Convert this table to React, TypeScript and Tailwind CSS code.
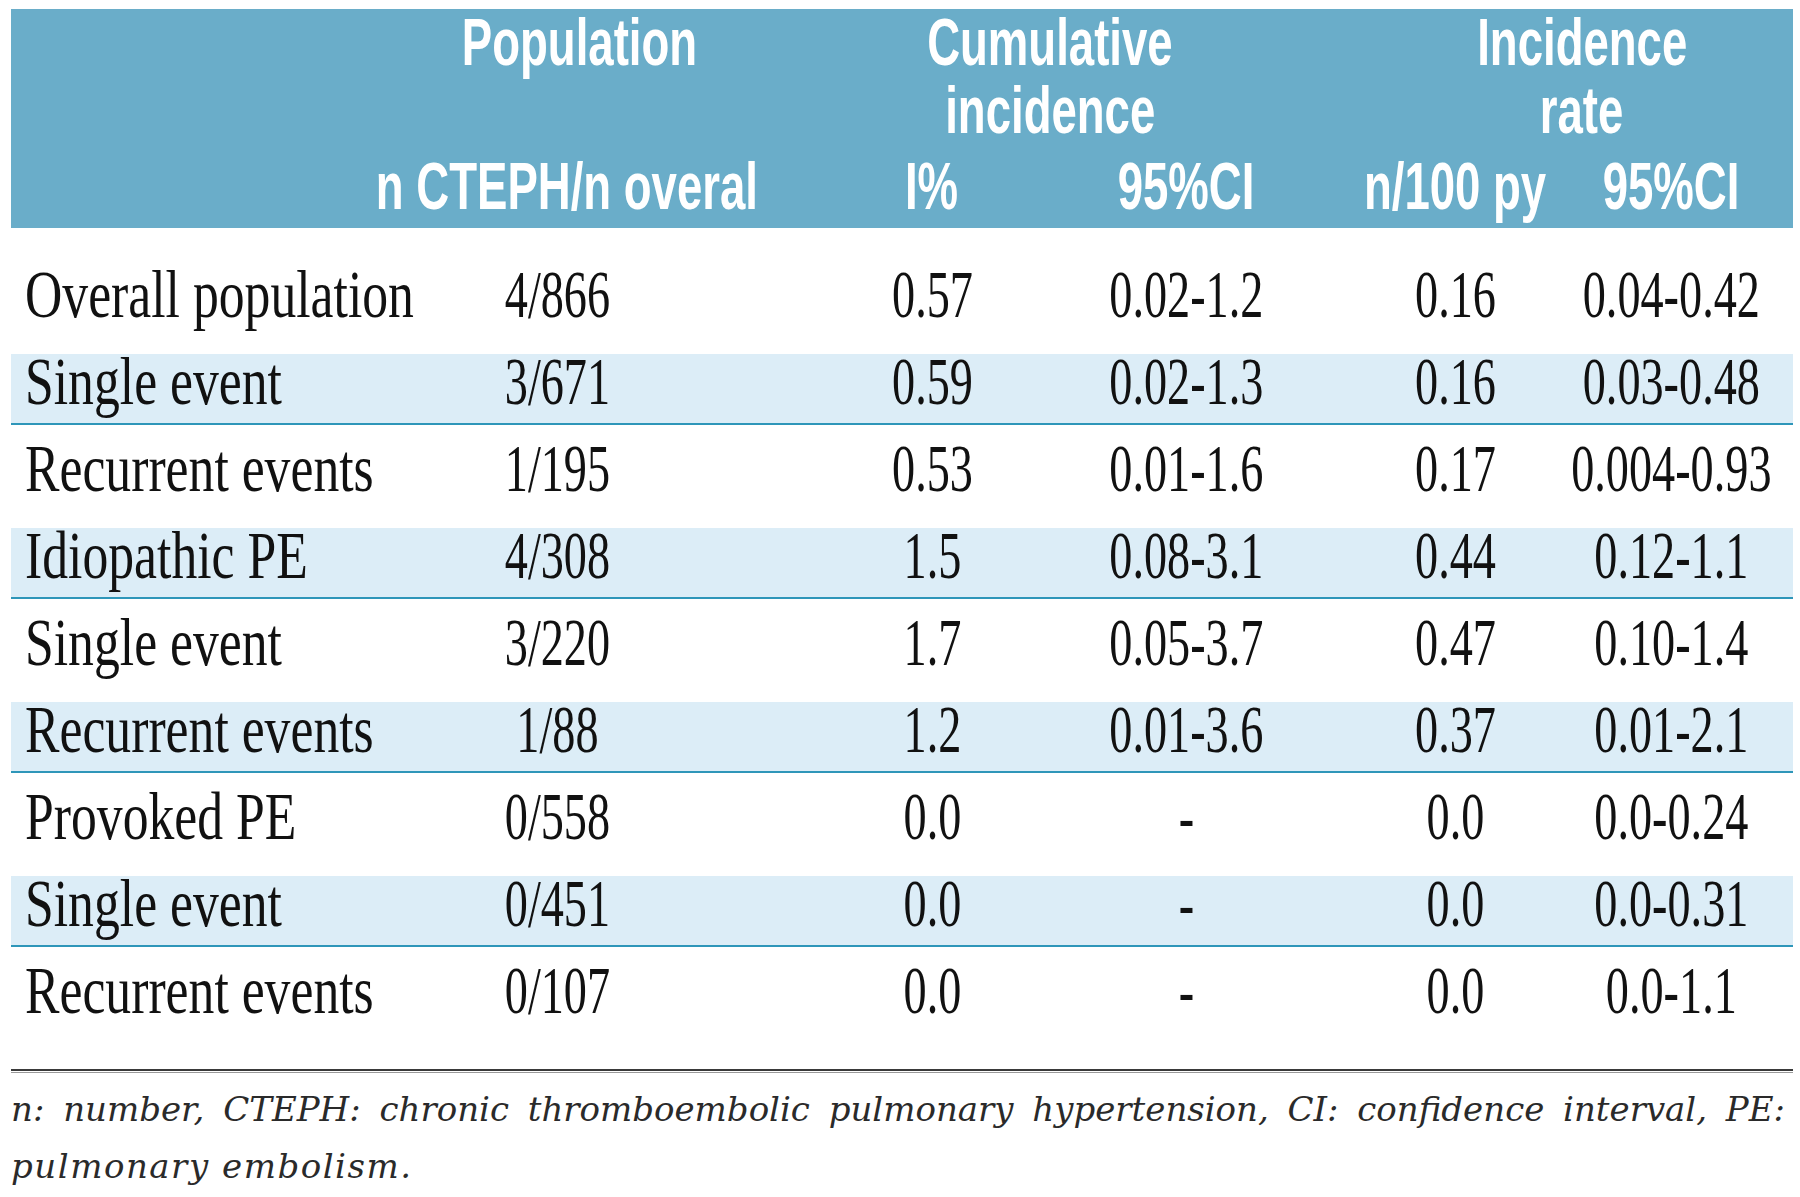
import React from "react";

type Row = {
  label: string;
  n: string;
  pct: string;
  ci: string;
  rate: string;
  rateCi: string;
  shaded: boolean;
};

const ROWS: Row[] = [
  { label: "Overall population", n: "4/866", pct: "0.57", ci: "0.02-1.2", rate: "0.16", rateCi: "0.04-0.42", shaded: false },
  { label: "Single event", n: "3/671", pct: "0.59", ci: "0.02-1.3", rate: "0.16", rateCi: "0.03-0.48", shaded: true },
  { label: "Recurrent events", n: "1/195", pct: "0.53", ci: "0.01-1.6", rate: "0.17", rateCi: "0.004-0.93", shaded: false },
  { label: "Idiopathic PE", n: "4/308", pct: "1.5", ci: "0.08-3.1", rate: "0.44", rateCi: "0.12-1.1", shaded: true },
  { label: "Single event", n: "3/220", pct: "1.7", ci: "0.05-3.7", rate: "0.47", rateCi: "0.10-1.4", shaded: false },
  { label: "Recurrent events", n: "1/88", pct: "1.2", ci: "0.01-3.6", rate: "0.37", rateCi: "0.01-2.1", shaded: true },
  { label: "Provoked PE", n: "0/558", pct: "0.0", ci: "-", rate: "0.0", rateCi: "0.0-0.24", shaded: false },
  { label: "Single event", n: "0/451", pct: "0.0", ci: "-", rate: "0.0", rateCi: "0.0-0.31", shaded: true },
  { label: "Recurrent events", n: "0/107", pct: "0.0", ci: "-", rate: "0.0", rateCi: "0.0-1.1", shaded: false },
];

// same column tracks for header and body so the centres line up
const COLS = "grid grid-cols-[250px_592px_158px_350px_188px_244px]";

function Head({ children }: { children: React.ReactNode }) {
  return (
    <span className="inline-block origin-center scale-x-[0.69] whitespace-nowrap">
      {children}
    </span>
  );
}

function Num({ children }: { children: React.ReactNode }) {
  return (
    <div className="flex justify-center">
      <span className="inline-block shrink-0 origin-center scale-x-[0.68] whitespace-nowrap">
        {children}
      </span>
    </div>
  );
}

export default function App() {
  return (
    <div className="min-h-screen w-full bg-white pt-[9px]">
      <div className="ml-[11px] w-[1782px]">
        {/* header */}
        <div
          className={`${COLS} h-[219px] grid-rows-[68px_76px_75px] bg-[#6aadc9] text-[66px] font-bold leading-[66px] text-white [font-family:'Liberation_Sans',Arial,sans-serif]`}
        >
          <div />
          <div className="flex justify-center pl-[44px]">
            <Head>Population</Head>
          </div>
          <div className="col-span-2 flex justify-center pr-[114px]">
            <Head>Cumulative</Head>
          </div>
          <div className="col-span-2 flex justify-center pl-[10px]">
            <Head>Incidence</Head>
          </div>

          <div />
          <div />
          <div className="col-span-2 flex justify-center pr-[114px]">
            <Head>incidence</Head>
          </div>
          <div className="col-span-2 flex justify-center pl-[10px]">
            <Head>rate</Head>
          </div>

          <div />
          <div className="flex justify-center pl-[20px]">
            <Head>n CTEPH/n overal</Head>
          </div>
          <div className="flex justify-center">
            <Head>I%</Head>
          </div>
          <div className="flex justify-center">
            <Head>95%CI</Head>
          </div>
          <div className="flex justify-center">
            <Head>n/100 py</Head>
          </div>
          <div className="flex justify-center">
            <Head>95%CI</Head>
          </div>
        </div>

        {/* body */}
        <div className="mt-[23px] text-[68px] leading-[54px] text-[#111] [font-family:'Liberation_Serif','Times_New_Roman',serif]">
          {ROWS.map((row, i) => (
            <div key={i} className="h-[87px] pt-[16px]">
              <div
                className={`${COLS} h-[71px] ${
                  row.shaded ? "border-b-2 border-[#2e96b9] bg-[#dcedf7]" : ""
                }`}
              >
                <div className="pl-[14px]">
                  <span className="inline-block origin-left scale-x-[0.76] whitespace-nowrap">
                    {row.label}
                  </span>
                </div>
                <Num>{row.n}</Num>
                <Num>{row.pct}</Num>
                <Num>{row.ci}</Num>
                <Num>{row.rate}</Num>
                <Num>{row.rateCi}</Num>
              </div>
            </div>
          ))}
        </div>

        {/* closing rule */}
        <div className="mt-[35px] h-[4px] border-t-2 border-b border-t-[#3a3a3a] border-b-[#9a9a9a]" />

        {/* footnote */}
        <div className="mt-[8px] w-[1774px] text-[34px] italic leading-[57px] text-[#2a2a2a] [font-family:'DejaVu_Serif',Georgia,serif]">
          <p className="text-justify [text-align-last:justify]">
            n: number, CTEPH: chronic thromboembolic pulmonary hypertension, CI: confidence interval, PE:
          </p>
          <p className="tracking-[0.045em]">pulmonary embolism.</p>
        </div>
      </div>
    </div>
  );
}
